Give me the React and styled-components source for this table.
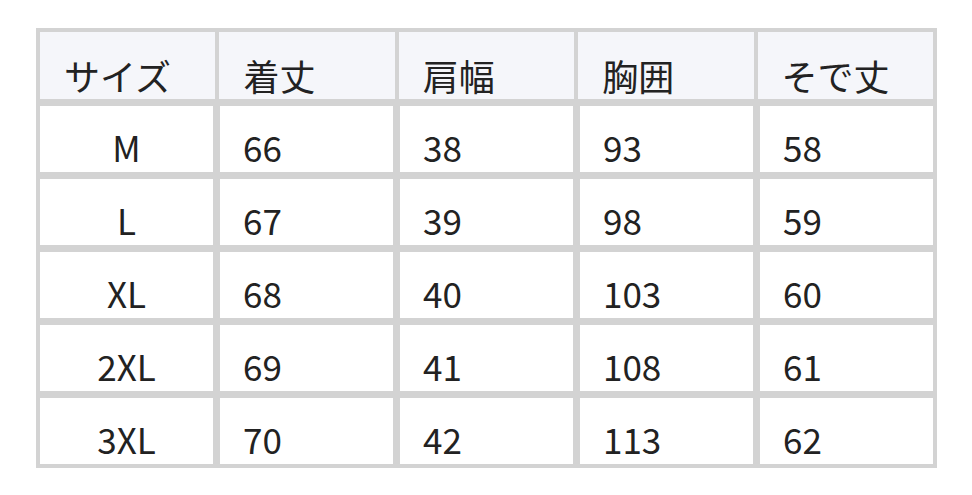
import React from "react";
import styled, { createGlobalStyle } from "styled-components";

const GlobalStyle = createGlobalStyle`
  html, body {
    margin: 0;
    padding: 0;
    background: #ffffff;
  }
  body {
    font-family: "Noto Sans CJK JP", "Noto Sans", sans-serif;
    color: #222222;
  }
`;

const Page = styled.div`
  padding: 28px 0 0 36px;
`;

const Table = styled.div`
  width: 901px;
  box-sizing: border-box;
  border: 4px solid #d3d3d3;
  background: #d3d3d3;
  display: flex;
  flex-direction: column;
  gap: 7px;
`;

const HeaderRow = styled.div`
  display: grid;
  grid-template-columns: repeat(5, 1fr);
  column-gap: 4px;
  height: 67px;
`;

const BodyRow = styled.div`
  display: grid;
  grid-template-columns: repeat(5, 1fr);
  column-gap: 7px;
  height: 66px;
`;

const HeadCell = styled.div`
  background: #f5f6fa;
  display: flex;
  align-items: flex-end;
  padding: 0 0 6px 24px;
  font-size: 36px;
  line-height: 36px;
  white-space: nowrap;
`;

const Cell = styled.div`
  background: #ffffff;
  display: flex;
  align-items: flex-end;
  justify-content: ${(p) => (p.$center ? "center" : "flex-start")};
  padding: ${(p) => (p.$center ? "0 0 8px 0" : "0 0 8px 23px")};
  font-size: 35px;
  line-height: 35px;
  white-space: nowrap;
`;

const headers = ["サイズ", "着丈", "肩幅", "胸囲", "そで丈"];
const rows = [
  ["M", "66", "38", "93", "58"],
  ["L", "67", "39", "98", "59"],
  ["XL", "68", "40", "103", "60"],
  ["2XL", "69", "41", "108", "61"],
  ["3XL", "70", "42", "113", "62"],
];

export default function App() {
  return (
    <>
      <GlobalStyle />
      <Page>
        <Table>
          <HeaderRow>
            {headers.map((h) => (
              <HeadCell key={h}>{h}</HeadCell>
            ))}
          </HeaderRow>
          {rows.map((r) => (
            <BodyRow key={r[0]}>
              {r.map((v, i) => (
                <Cell key={i} $center={i === 0}>
                  {v}
                </Cell>
              ))}
            </BodyRow>
          ))}
        </Table>
      </Page>
    </>
  );
}
